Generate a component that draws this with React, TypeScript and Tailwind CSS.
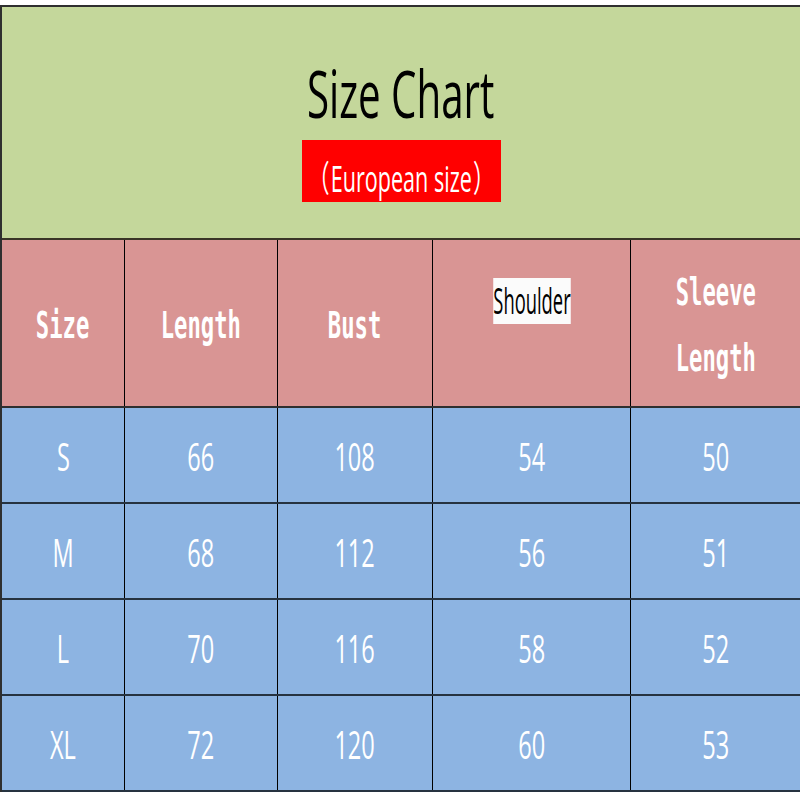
const sans = { fontFamily: '"Open Sans", "Noto Sans CJK SC", sans-serif' };

const rows = [
  ["S", "66", "108", "54", "50"],
  ["M", "68", "112", "56", "51"],
  ["L", "70", "116", "58", "52"],
  ["XL", "72", "120", "60", "53"],
];

const cols = "grid grid-cols-[122px_153px_155px_198px_170px]";

function HeadLabel({ text }: { text: string }) {
  return (
    <span className="inline-block scale-x-[0.6] whitespace-nowrap font-['DejaVu_Sans_Mono',monospace] text-[37px] font-bold leading-none text-white">
      {text}
    </span>
  );
}

export default function App() {
  return (
    <div className="h-[800px] w-[800px] bg-white pt-[5px]" style={sans}>
      <div className="border-l-2 border-t-2 border-[#2f2f2f]">
        {/* title block */}
        <div className="flex h-[233px] flex-col items-center border-b-2 border-[#3a3527] bg-[#c4d79b]">
          <div className="mt-[52px] flex h-[66px] w-[320px] justify-center">
            <span className="inline-block scale-x-[0.61] whitespace-nowrap text-[66px] leading-none text-black">
              Size Chart
            </span>
          </div>
          <div className="mt-[15px] flex h-[62px] w-[199px] justify-center bg-[#ff0000] pt-[21px]">
            <span className="inline-block shrink-0 scale-x-[0.6] whitespace-nowrap text-[36px] leading-none text-white">
              <span className="inline-block w-[1.1em] text-center">（</span>
              European size
              <span className="inline-block w-[1.1em] text-center">）</span>
            </span>
          </div>
        </div>

        {/* header row */}
        <div className={`${cols} h-[168px] border-b-2 border-[#2f2f2f] bg-[#d99594]`}>
          <div className="flex items-center justify-center pt-[5px]">
            <HeadLabel text="Size" />
          </div>
          <div className="flex items-center justify-center border-l border-black pt-[5px]">
            <HeadLabel text="Length" />
          </div>
          <div className="flex items-center justify-center border-l border-black pt-[5px]">
            <HeadLabel text="Bust" />
          </div>
          <div className="flex justify-center border-l border-black pt-[38px]">
            <div className="h-[46px] w-[152px] scale-x-[0.51] bg-[#fbfbfb] text-center">
              <span className="whitespace-nowrap text-[36px] leading-[46px] text-black">Shoulder</span>
            </div>
          </div>
          <div className="flex items-center justify-center border-l border-black pt-[6px]">
            <div className="flex flex-col items-center leading-[66px]">
              <span className="inline-block scale-x-[0.6] whitespace-nowrap font-['DejaVu_Sans_Mono',monospace] text-[37px] font-bold text-white">
                Sleeve
              </span>
              <span className="inline-block scale-x-[0.6] whitespace-nowrap font-['DejaVu_Sans_Mono',monospace] text-[37px] font-bold text-white">
                Length
              </span>
            </div>
          </div>
        </div>

        {/* data rows */}
        {rows.map((r) => (
          <div key={r[0]} className={`${cols} h-[96px] border-b-2 border-[#263340] bg-[#8db4e2]`}>
            {r.map((v, i) => (
              <div
                key={i}
                className={`flex items-center justify-center pt-[2px] ${i > 0 ? "border-l border-black" : ""}`}
              >
                <span className="inline-block scale-x-[0.62] whitespace-nowrap text-[38px] leading-none text-white">
                  {v}
                </span>
              </div>
            ))}
          </div>
        ))}
      </div>
    </div>
  );
}
